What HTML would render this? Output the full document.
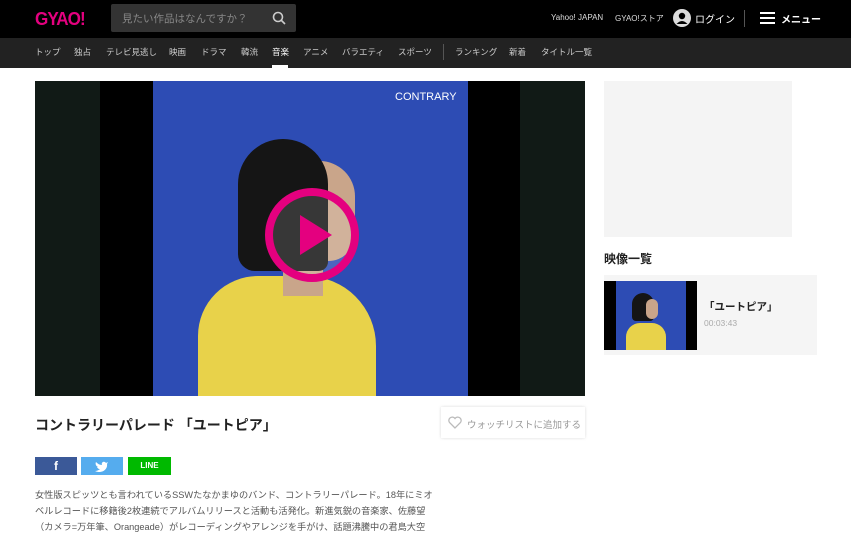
<!DOCTYPE html><html><head><meta charset="utf-8"><style>
*{margin:0;padding:0;box-sizing:border-box}
body{width:851px;height:533px;overflow:hidden;background:#fff;font-family:"Liberation Sans","Noto Sans CJK JP",sans-serif;position:relative}
.a{position:absolute}
.n{position:absolute;top:46px;font-size:8.5px;color:#ccc;white-space:nowrap}
</style></head><body>
<div class="a" style="left:0;top:0;width:851px;height:38px;background:#000"></div>
<div class="a" style="left:35px;top:9px;font-size:18px;font-weight:bold;color:#e4007f;letter-spacing:-1px;transform:scaleX(0.95);transform-origin:left">GYAO!</div>
<div class="a" style="left:111px;top:4px;width:185px;height:28px;background:#333;border-radius:2px"></div>
<div class="a" style="left:122px;top:11px;font-size:10.5px;color:#888">見たい作品はなんですか？</div>
<svg class="a" style="left:272px;top:11px" width="14" height="14"><circle cx="6" cy="6" r="4.5" fill="none" stroke="#ccc" stroke-width="1.6"/><line x1="9.5" y1="9.5" x2="13" y2="13" stroke="#ccc" stroke-width="1.6"/></svg>
<div class="a" style="left:551px;top:13px;font-size:8px;color:#ddd">Yahoo! JAPAN</div>
<div class="a" style="left:615px;top:13px;font-size:8px;color:#ddd">GYAO!ストア</div>
<svg class="a" style="left:673px;top:9px" width="18" height="18"><circle cx="9" cy="9" r="9" fill="#ddd"/><circle cx="9" cy="7" r="3.2" fill="#000"/><path d="M3.5 15 Q9 9 14.5 15" fill="#000"/></svg>
<div class="a" style="left:695px;top:11px;font-size:10px;color:#fff">ログイン</div>
<div class="a" style="left:744px;top:10px;width:1px;height:17px;background:#555"></div>
<div class="a" style="left:760px;top:12px;width:15px;height:2px;background:#fff;box-shadow:0 5px #fff,0 10px #fff"></div>
<div class="a" style="left:781px;top:11px;font-size:10px;color:#fff;font-weight:bold">メニュー</div>
<div class="a" style="left:0;top:38px;width:851px;height:30px;background:#222"></div>
<div class="n" style="left:35px">トップ</div><div class="n" style="left:74px">独占</div><div class="n" style="left:106px">テレビ見逃し</div><div class="n" style="left:169px">映画</div><div class="n" style="left:201px">ドラマ</div><div class="n" style="left:241px">韓流</div><div class="n" style="left:272px;color:#fff">音楽</div><div class="n" style="left:303px">アニメ</div><div class="n" style="left:342px">バラエティ</div><div class="n" style="left:398px">スポーツ</div>
<div class="a" style="left:443px;top:44px;width:1px;height:16px;background:#555"></div>
<div class="n" style="left:455px">ランキング</div><div class="n" style="left:509px">新着</div><div class="n" style="left:541px">タイトル一覧</div>
<div class="a" style="left:272px;top:65px;width:16px;height:3px;background:#fff"></div>
<!-- video -->
<div class="a" style="left:35px;top:81px;width:550px;height:315px;background:#111a16;overflow:hidden">
<div class="a" style="left:65px;top:0;width:420px;height:315px;background:#000"></div>
<div class="a" style="left:118px;top:0;width:315px;height:315px;background:#2d4cb4;overflow:hidden">
<div class="a" style="left:242px;top:10px;font-size:11px;color:#fff">CONTRARY</div>
<div class="a" style="left:45px;top:195px;width:178px;height:160px;background:#e8d24a;border-radius:60px 70px 0 0"></div>
<div class="a" style="left:130px;top:165px;width:40px;height:50px;background:#c9a58a"></div>
<div class="a" style="left:140px;top:80px;width:62px;height:100px;background:#c9a58a;border-radius:30px 40px 30px 20px"></div>
<div class="a" style="left:85px;top:58px;width:90px;height:132px;background:#151515;border-radius:48px 48px 10px 18px"></div>
</div>
<svg class="a" style="left:229px;top:106px" width="96" height="96"><circle cx="48" cy="48" r="43" fill="rgba(255,255,255,0.15)" stroke="#e4007f" stroke-width="8"/><path d="M36 28 L68 48 L36 68Z" fill="#e4007f"/></svg>
</div>
<div class="a" style="left:604px;top:81px;width:188px;height:156px;background:#f4f4f4"></div>
<div class="a" style="left:604px;top:250px;font-size:12px;font-weight:bold;color:#222">映像一覧</div>
<div class="a" style="left:604px;top:275px;width:213px;height:80px;background:#f5f5f5"></div>
<div class="a" style="left:604px;top:281px;width:93px;height:69px;background:#000;overflow:hidden">
<div class="a" style="left:12px;top:0;width:70px;height:69px;background:#2d4cb4"></div>
<div class="a" style="left:22px;top:42px;width:40px;height:30px;background:#e8d24a;border-radius:14px 14px 0 0"></div>
<div class="a" style="left:28px;top:12px;width:22px;height:28px;background:#151515;border-radius:11px 11px 4px 4px"></div>
<div class="a" style="left:42px;top:18px;width:12px;height:20px;background:#c9a58a;border-radius:6px"></div>
</div>
<div class="a" style="left:704px;top:299px;font-size:10.5px;font-weight:bold;color:#222">「ユートピア」</div>
<div class="a" style="left:704px;top:318px;font-size:8.5px;color:#aaa">00:03:43</div>
<div class="a" style="left:35px;top:415px;font-size:14px;font-weight:bold;color:#222">コントラリーパレード 「ユートピア」</div>
<div class="a" style="left:441px;top:407px;width:144px;height:31px;background:#fff;box-shadow:0 0 3px rgba(0,0,0,.15)"></div>
<svg class="a" style="left:448px;top:416px" width="14" height="13"><path d="M7 12 L1.5 6.5 A3 3 0 0 1 7 2.5 A3 3 0 0 1 12.5 6.5Z" fill="none" stroke="#bbb" stroke-width="1.3"/></svg>
<div class="a" style="left:467px;top:417px;font-size:9.5px;color:#999">ウォッチリストに追加する</div>
<div class="a" style="left:35px;top:457px;width:42px;height:18px;background:#3b5998;color:#fff;font-weight:bold;font-size:12px;text-align:center;line-height:18px">f</div>
<div class="a" style="left:81px;top:457px;width:42px;height:18px;background:#55acee"></div>
<svg class="a" style="left:95px;top:460px" width="14" height="12"><path d="M13 2 C11 3 11 3 10 2 C8 1 6 3 7 5 C4 5 2 3 1 2 C0 4 1 6 3 7 L2 7 C3 9 4 9 5 9 C4 10 2 11 0 11 C6 14 13 10 12 4Z" fill="#fff"/></svg>
<div class="a" style="left:128px;top:457px;width:43px;height:18px;background:#00b900;color:#fff;font-weight:bold;font-size:8px;text-align:center;line-height:18px">LINE</div>
<div class="a" style="left:35px;top:487px;width:400px;font-size:9.2px;line-height:16px;color:#555;white-space:nowrap">女性版スピッツとも言われているSSWたなかまゆのバンド、コントラリーパレード。18年にミオ<br>ベルレコードに移籍後2枚連続でアルバムリリースと活動も活発化。新進気鋭の音楽家、佐藤望<br>（カメラ=万年筆、Orangeade）がレコーディングやアレンジを手がけ、話題沸騰中の君島大空</div>
</body></html>
